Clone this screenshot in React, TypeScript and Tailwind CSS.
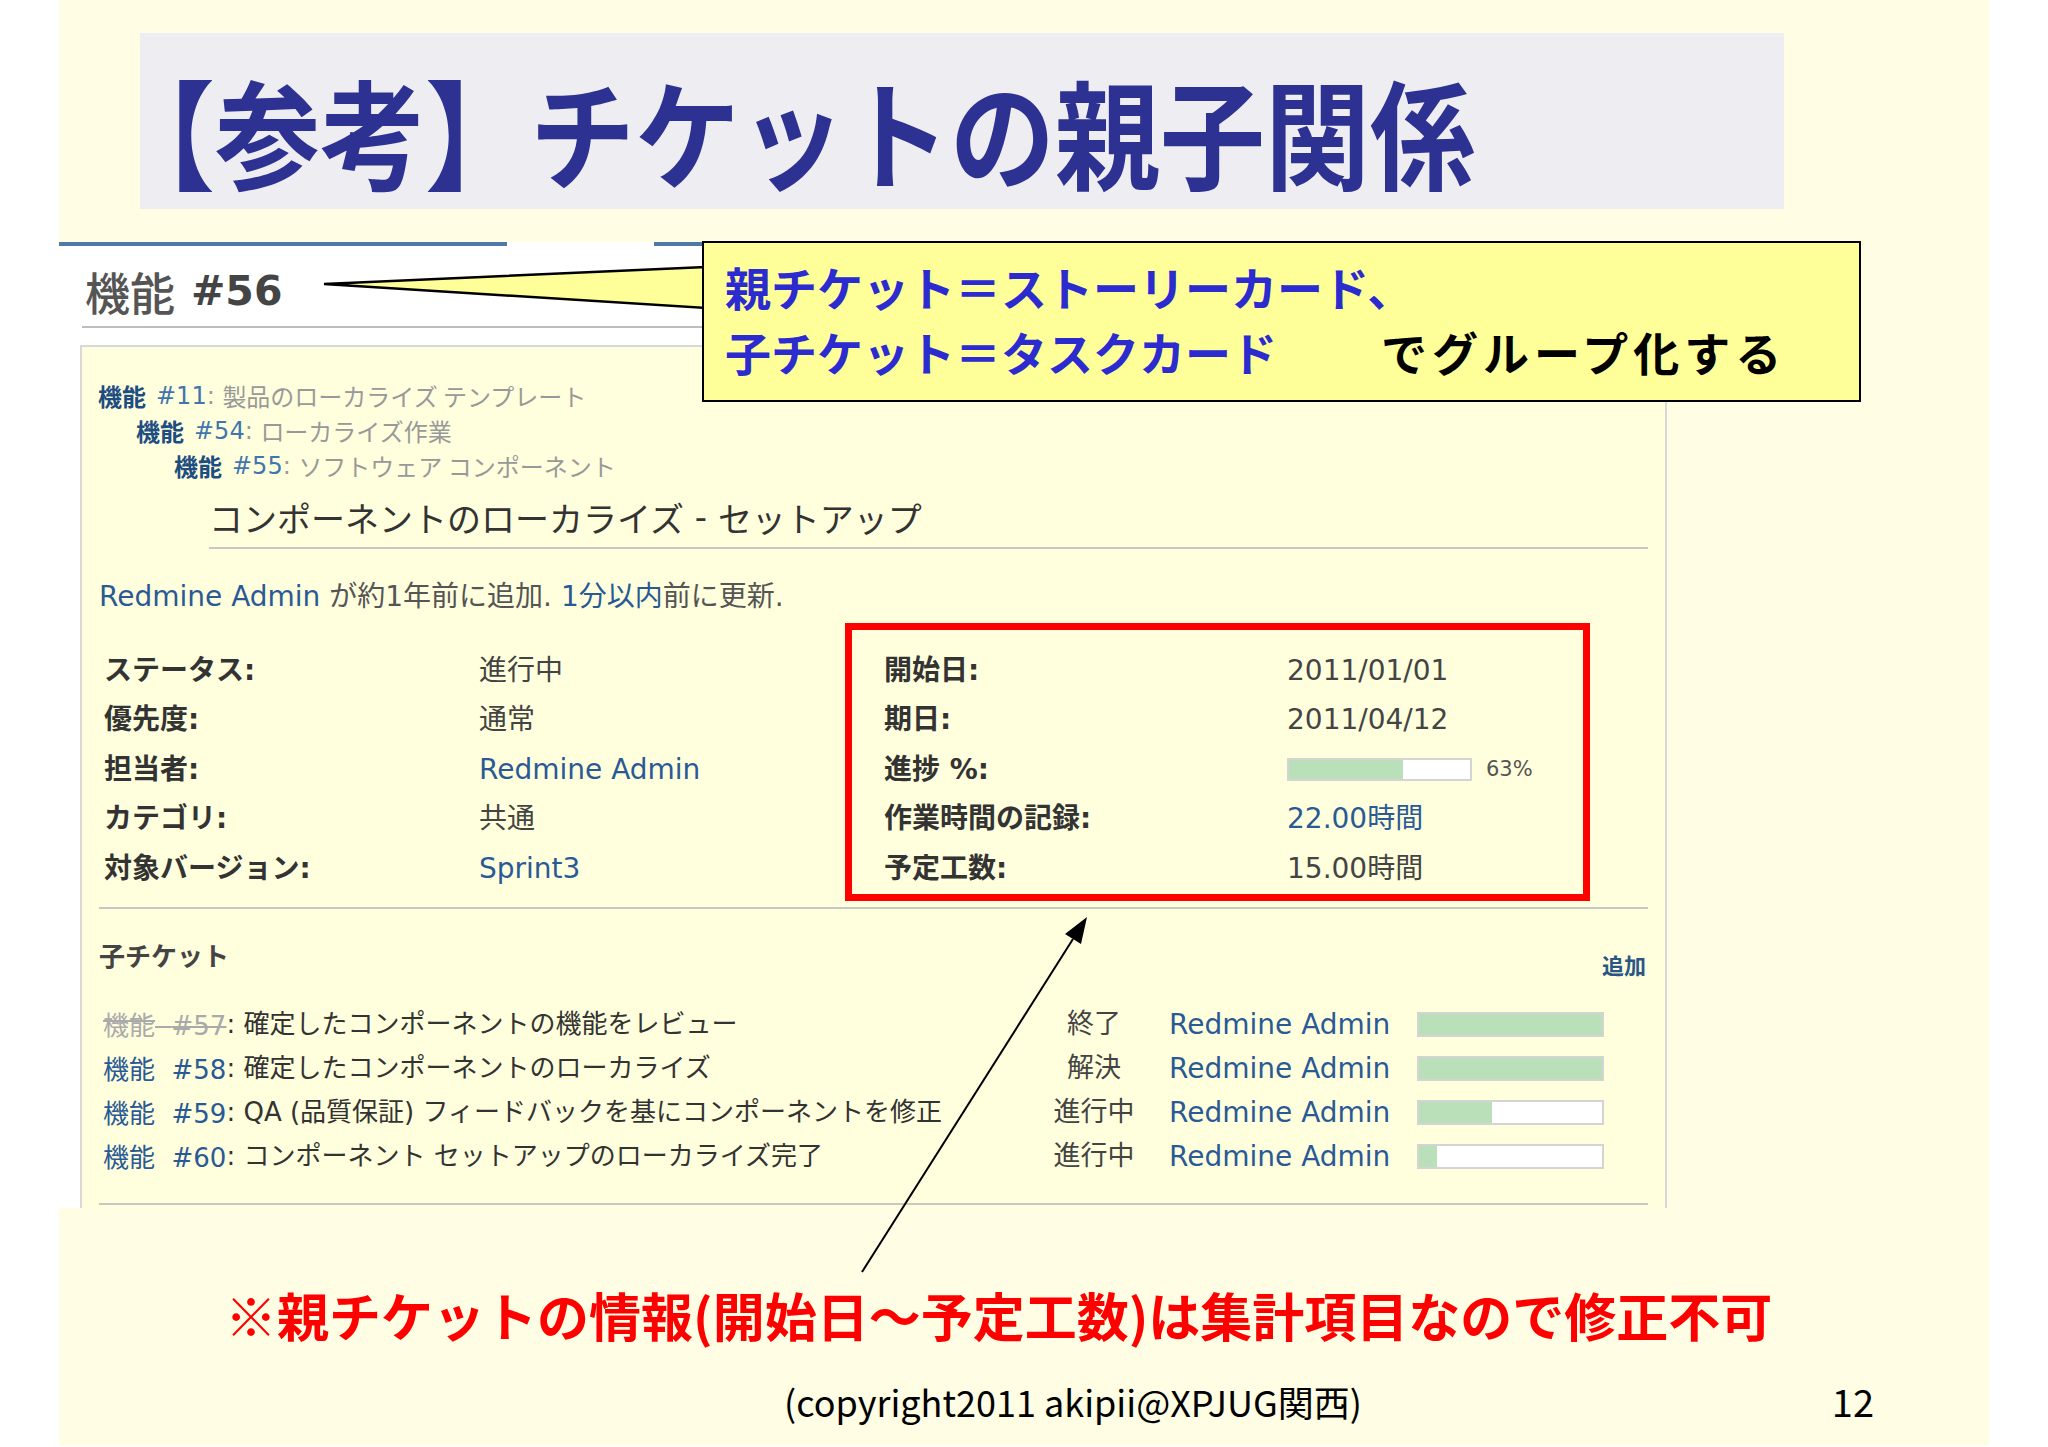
import React from "react";

const RM = "font-['DejaVu_Sans','Noto_Sans_CJK_JP',sans-serif]";
const JP = "font-['Noto_Sans_CJK_JP',sans-serif]";

function Bar({ pct, w, h }: { pct: number; w: string; h: string }) {
  return (
    <div className={`${w} ${h} border-2 border-[#D4D4D4] bg-white flex`}>
      <div className="h-full bg-[#BAE0BA]" style={{ width: `${pct}%` }} />
    </div>
  );
}

const leftRows: { label: string; value: string; link?: boolean }[] = [
  { label: "ステータス:", value: "進行中" },
  { label: "優先度:", value: "通常" },
  { label: "担当者:", value: "Redmine Admin", link: true },
  { label: "カテゴリ:", value: "共通" },
  { label: "対象バージョン:", value: "Sprint3", link: true },
];

const subtasks = [
  { id: "#57", subject: "確定したコンポーネントの機能をレビュー", status: "終了", pct: 100, closed: true },
  { id: "#58", subject: "確定したコンポーネントのローカライズ", status: "解決", pct: 100 },
  { id: "#59", subject: "QA (品質保証) フィードバックを基にコンポーネントを修正", status: "進行中", pct: 40 },
  { id: "#60", subject: "コンポーネント セットアップのローカライズ完了", status: "進行中", pct: 10 },
];

export default function App() {
  return (
    <div className={`relative w-[2048px] h-[1447px] bg-white overflow-hidden ${JP}`}>
      {/* slide */}
      <div className="ml-[59px] w-[1930px] h-[1446px] bg-[#FFFDE4] flex flex-col">
        {/* title */}
        <div className="ml-[81px] mt-[33px] w-[1644px] h-[176px] bg-[#EEEEF2] flex items-center pt-[16px]">
          <div className="-ml-[30px] text-[105px] leading-none font-bold text-[#2D3192] whitespace-nowrap scale-y-[1.13]">
            【参考】チケットの親子関係
          </div>
        </div>

        {/* redmine screenshot */}
        <div className={`mt-[33px] w-[1608px] h-[966px] bg-white flex flex-col ${RM}`}>
          <div className="flex h-[4px]">
            <div className="w-[448px] bg-[#507AA6]" />
            <div className="w-[147px]" />
            <div className="flex-1 bg-[#507AA6]" />
          </div>
          <div className="h-[80px] pt-[12px] pl-[26px] flex items-center whitespace-nowrap">
            <span className={`${JP} text-[45px] text-[#555] font-medium`}>機能</span>
            <span className="ml-[16px] text-[41px] font-bold text-[#444]">#56</span>
          </div>
          <div className="ml-[23px] h-[2px] bg-[#BDBDBD]" />
          <div className="ml-[21px] mt-[17px] flex-1 border-l-2 border-t-2 border-r-2 border-[#D8D8D8] bg-[#FFFFDD] flex flex-col">
            {/* breadcrumbs */}
            <div className="pt-[31px] flex flex-col text-[24px] whitespace-nowrap">
              {[
                { pl: "pl-[16px]", id: "#11", t: "製品のローカライズ テンプレート" },
                { pl: "pl-[54px]", id: "#54", t: "ローカライズ作業" },
                { pl: "pl-[92px]", id: "#55", t: "ソフトウェア コンポーネント" },
              ].map((b) => (
                <div key={b.id} className={`h-[35px] flex items-center ${b.pl}`}>
                  <span className={`${JP} font-bold text-[#1E4D82]`}>機能</span>
                  <span className="ml-[10px] text-[#4275AE]">{b.id}</span>
                  <span className="text-[#999]">:&nbsp;</span>
                  <span className={`${JP} text-[#999]`}>{b.t}</span>
                </div>
              ))}
            </div>
            {/* subject */}
            <div className="ml-[127px] mt-[12px] h-[45px] flex items-center text-[34px] text-[#333] whitespace-nowrap">
              <span className={JP}>コンポーネントのローカライズ</span>
              <span>&nbsp;-&nbsp;</span>
              <span className={JP}>セットアップ</span>
            </div>
            <div className="ml-[127px] mr-[17px] mt-[7px] h-[2px] bg-[#C8C8C8]" />
            {/* author */}
            <div className="pl-[17px] mt-[30px] h-[36px] flex items-center text-[28px] text-[#555] whitespace-nowrap">
              <span className="text-[#2A5A95]">Redmine Admin</span>
              <span>&nbsp;が約1年前に追加.&nbsp;</span>
              <span className="text-[#2A5A95]">1分以内</span>
              <span>前に更新.</span>
            </div>
            {/* attributes */}
            <div className="pl-[17px] mt-[8px] flex items-start text-[28px] whitespace-nowrap">
              <div className="w-[746px] pt-[23px] pl-[5px] flex flex-col">
                {leftRows.map((r) => (
                  <div key={r.label} className="h-[49.5px] flex items-center">
                    <span className="w-[375px] font-bold text-[#333]">{r.label}</span>
                    <span className={r.link ? "text-[#2A5A95]" : "text-[#444]"}>{r.value}</span>
                  </div>
                ))}
              </div>
              <div className="w-[745px] border-[7px] border-[#FF0000] pt-[16px] pb-[0px] pl-[32px] flex flex-col">
                <div className="h-[49.5px] flex items-center">
                  <span className="w-[403px] font-bold text-[#333]">開始日:</span>
                  <span className="text-[#444]">2011/01/01</span>
                </div>
                <div className="h-[49.5px] flex items-center">
                  <span className="w-[403px] font-bold text-[#333]">期日:</span>
                  <span className="text-[#444]">2011/04/12</span>
                </div>
                <div className="h-[49.5px] flex items-center">
                  <span className="w-[403px] font-bold text-[#333]">進捗 %:</span>
                  <Bar pct={63} w="w-[185px]" h="h-[23px]" />
                  <span className="ml-[14px] text-[21px] text-[#555]">63%</span>
                </div>
                <div className="h-[49.5px] flex items-center">
                  <span className="w-[403px] font-bold text-[#333]">作業時間の記録:</span>
                  <span className="text-[#2A5A95]">22.00時間</span>
                </div>
                <div className="h-[49.5px] flex items-center">
                  <span className="w-[403px] font-bold text-[#333]">予定工数:</span>
                  <span className="text-[#444]">15.00時間</span>
                </div>
              </div>
            </div>
            <div className="ml-[17px] mr-[17px] mt-[6px] h-[2px] bg-[#C8C8C8]" />
            {/* subtasks header */}
            <div className="ml-[17px] mr-[19px] mt-[26px] h-[40px] flex justify-between items-start whitespace-nowrap">
              <span className={`${JP} text-[26px] leading-[40px] font-bold text-[#444]`}>子チケット</span>
              <span className={`${JP} mt-[14px] text-[22px] leading-[30px] font-bold text-[#2A5685]`}>追加</span>
            </div>
            <div className="mt-[28px] pl-[21px] flex flex-col whitespace-nowrap">
              {subtasks.map((s) => (
                <div key={s.id} className="h-[44px] flex items-center">
                  <div className="w-[941px] text-[26px] flex items-center">
                    <span className={s.closed ? "line-through text-[#AAA]" : "text-[#2A5A95]"}>
                      <span className={JP}>機能</span>&nbsp;&nbsp;{s.id}
                    </span>
                    <span className="text-[#333]">:&nbsp;</span>
                    <span className="text-[#333]">{s.subject}</span>
                  </div>
                  <div className="w-[100px] text-center text-[27px] text-[#444]">{s.status}</div>
                  <div className="ml-[25px] w-[248px] text-[28px] text-[#2A5A95]">Redmine Admin</div>
                  <Bar pct={s.pct} w="w-[187px]" h="h-[25px]" />
                </div>
              ))}
            </div>
            <div className="ml-[17px] mr-[17px] mt-[24px] h-[2px] bg-[#C8C8C8]" />
          </div>
        </div>

        {/* bottom note */}
        <div className="ml-[166px] mt-[77px] h-[60px] flex items-center text-[52px] leading-none font-bold text-[#FF0000] whitespace-nowrap">
          ※親チケットの情報(開始日～予定工数)は集計項目なので修正不可
        </div>
        <div className="mt-[34px] h-[44px] flex items-center text-[36px] leading-none text-black whitespace-nowrap">
          <span className="ml-[725px]">(copyright2011 akipii@XPJUG関西)</span>
          <span className="ml-auto mr-[115px] text-[38px]">12</span>
        </div>
      </div>

      {/* callout pointer */}
      <svg className="absolute left-0 top-0 pointer-events-none" width="2048" height="1447">
        <polygon points="706,267 324,284 706,308" fill="#FFFF99" stroke="#000" strokeWidth="2.5" strokeLinejoin="miter" />
      </svg>
      {/* callout box */}
      <div className="absolute left-[702px] top-[241px] w-[1159px] h-[161px] bg-[#FFFF99] border-2 border-black pl-[21px] pt-[11px] text-[46px] leading-[65px] font-bold whitespace-nowrap">
        <div className="text-[#2B2BCF]">親チケット＝ストーリーカード、</div>
        <div className="flex">
          <span className="w-[656px] text-[#2B2BCF]">子チケット＝タスクカード</span>
          <span className="text-black tracking-[5px]">でグループ化する</span>
        </div>
      </div>

      {/* arrow */}
      <svg className="absolute left-0 top-0 pointer-events-none" width="2048" height="1447">
        <line x1="862" y1="1272" x2="1073" y2="939" stroke="#000" strokeWidth="2" />
        <polygon points="1087,917 1081,944 1065,934" fill="#000" />
      </svg>
    </div>
  );
}
